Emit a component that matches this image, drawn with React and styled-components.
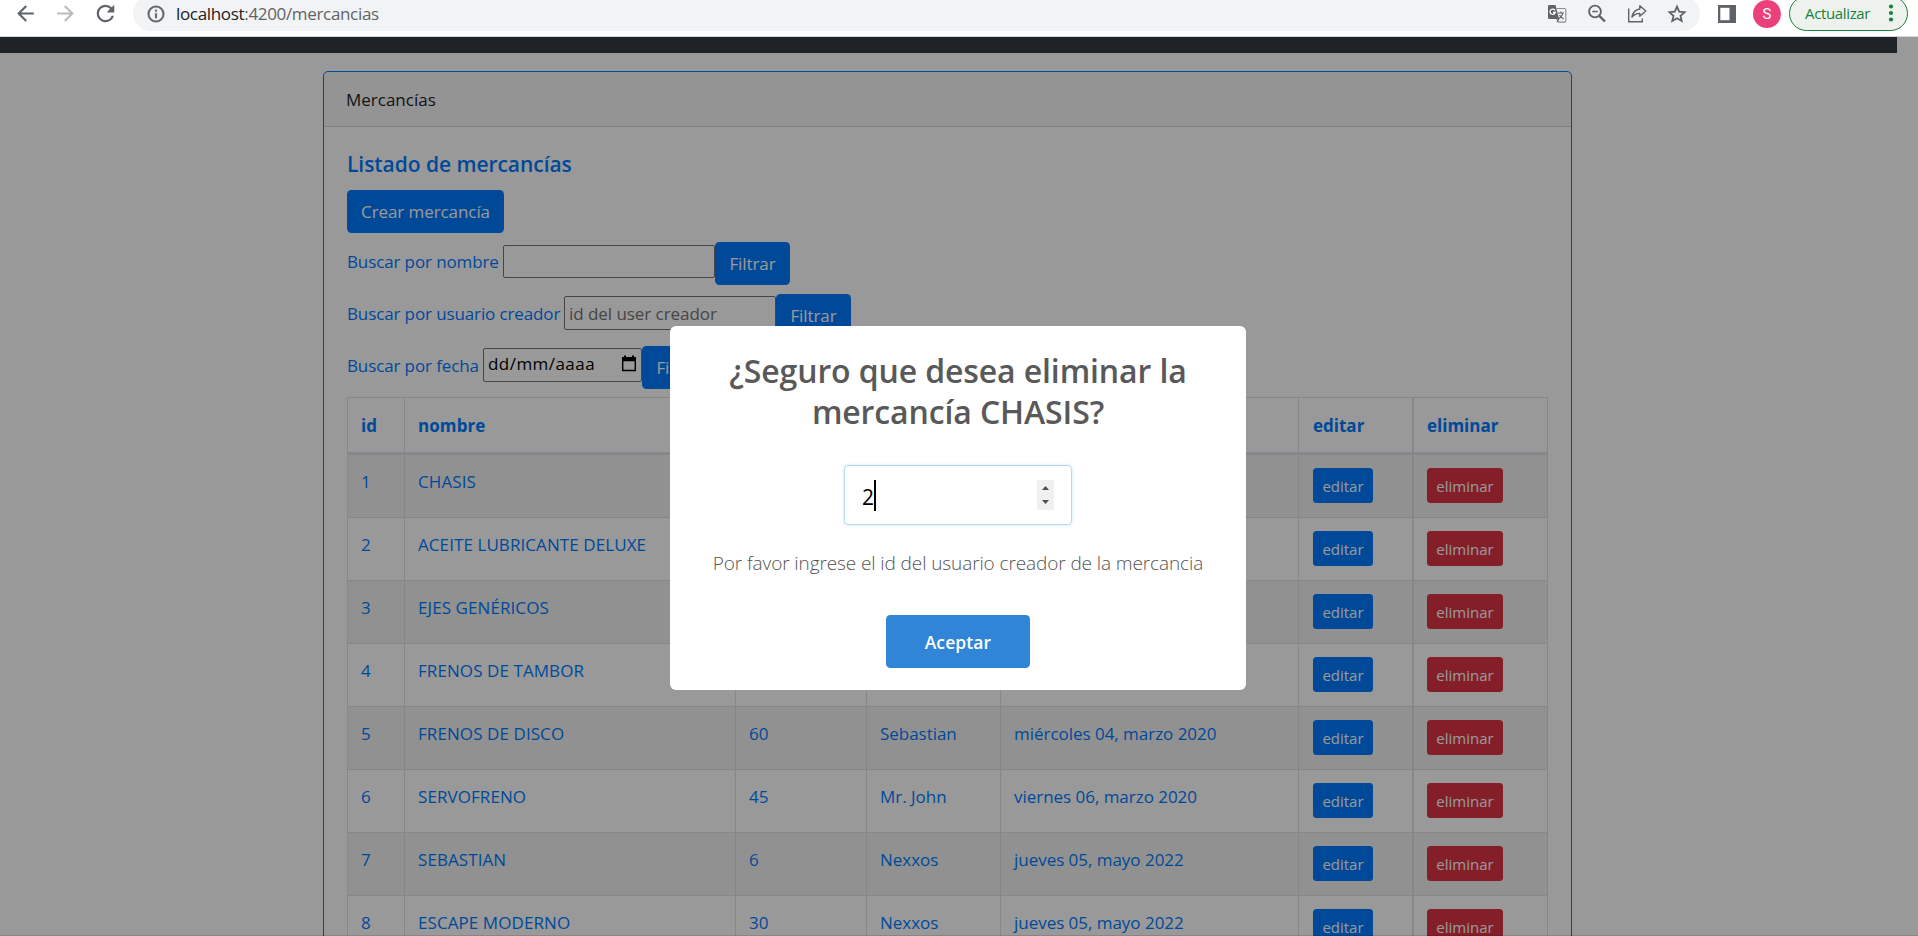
import React from "react";
import styled, { createGlobalStyle, css } from "styled-components";

const GlobalStyle = createGlobalStyle`
  *, *::before, *::after { box-sizing: border-box; }
  html, body { margin: 0; padding: 0; }
  body {
    font-family: "Open Sans", "Noto Sans", sans-serif;
    font-size: 17px;
    color: #212529;
    background: #fff;
    overflow: hidden;
  }
`;

/* ---------- browser toolbar ---------- */

const Window = styled.div`
  width: 1918px;
  height: 936px;
  display: flex;
  flex-direction: column;
  overflow: hidden;
`;

const Toolbar = styled.header`
  flex: none;
  height: 37px;
  background: #fff;
  border-bottom: 1px solid #d6d7d9;
  overflow: hidden;
`;

const ToolbarRow = styled.div`
  display: flex;
  align-items: center;
  height: 35px;
  margin-top: -4px;
  padding: 0 10px 0 13px;
`;

const NavIcons = styled.div`
  display: flex;
  align-items: center;
  gap: 16px;
  width: 120px;
  height: 33px;
`;

const NavIcon = styled.svg`
  flex: none;
  width: 25px;
  height: 25px;
  margin-right: -1px;
  fill: ${(p) => (p.$muted ? "#babcbe" : "#5f6368")};
`;

const Omnibox = styled.div`
  display: flex;
  align-items: center;
  width: 1567px;
  height: 35px;
  padding: 0 13px 0 13px;
  border-radius: 18px;
  background: #f1f3f4;
`;

const Url = styled.div`
  flex: 1;
  margin-left: 10px;
  font-size: 17px;
  letter-spacing: -0.33px;
  line-height: 35px;
  color: #5f6368;
`;

const UrlHost = styled.span`
  color: #202124;
`;

const OmniIcons = styled.div`
  display: flex;
  align-items: center;
  gap: 20px;
`;

const OmniIcon = styled.svg`
  flex: none;
  display: block;
  width: 20px;
  height: 20px;
`;

const PanelIcon = styled.svg`
  flex: none;
  width: 18px;
  height: 18px;
  margin-left: 18px;
`;

const Avatar = styled.div`
  width: 28px;
  height: 28px;
  margin-left: 17px;
  border-radius: 50%;
  background: #ec407a;
  color: #fff;
  font-family: Roboto, sans-serif;
  font-size: 15px;
  line-height: 28px;
  text-align: center;
`;

const UpdatePill = styled.div`
  display: flex;
  align-items: center;
  justify-content: space-between;
  width: 119px;
  height: 35px;
  margin-left: 8px;
  padding: 0 13px 2px 15px;
  border: 1.5px solid #188038;
  border-radius: 18px;
  background: #edf2ee;
  color: #188038;
  font-size: 15px;
  letter-spacing: -0.35px;
  line-height: 32px;
`;

/* ---------- page ---------- */

const Viewport = styled.div`
  position: relative;
  flex: 1;
  overflow: hidden;
  background: #fff;
`;

const Navbar = styled.div`
  width: 1897px;
  height: 16px;
  background: #343a40;
`;

const Card = styled.section`
  width: 1249px;
  height: 900px;
  margin: 18px 0 0 323px;
  border: 1px solid #007bff;
  border-radius: 5px;
  color: #007bff;
`;

const CardHeader = styled.div`
  height: 55px;
  padding-left: 22px;
  border-bottom: 1px solid rgba(0, 0, 0, 0.125);
  background: rgba(0, 0, 0, 0.03);
  color: #212529;
  line-height: 56px;
`;

const CardBody = styled.div`
  padding: 22px 23px;
`;

const CardTitle = styled.h5`
  margin: 0 0 12px;
  padding-top: 2px;
  font-size: 21px;
  font-weight: 600;
  letter-spacing: -0.05px;
  line-height: 27px;
`;

const Button = styled.button`
  display: block;
  flex: none;
  width: ${(p) => p.$w}px;
  height: 43px;
  padding: 0;
  border: 0;
  border-radius: 4.5px;
  background: #007bff;
  color: #fff;
  font: inherit;
  letter-spacing: -0.08px;
  line-height: 43px;
  ${(p) =>
    p.$small &&
    css`
      height: 35px;
      border-radius: 3.5px;
      font-size: 15px;
      letter-spacing: 0;
      line-height: 36px;
    `}
  ${(p) =>
    p.$danger &&
    css`
      background: #dc3545;
    `}
`;

const FilterRow = styled.div`
  display: flex;
  align-items: flex-start;
  height: 43px;
  margin-top: 9px;
`;

const FilterLabel = styled.label`
  flex: none;
  width: ${(p) => p.$w}px;
  letter-spacing: -0.12px;
  line-height: 39px;
  white-space: nowrap;
`;

const field = css`
  flex: none;
  width: ${(p) => p.$w}px;
  height: ${(p) => p.$h || 34}px;
  margin: ${(p) => p.$top || 2}px 0 0;
  border: 1px solid #767676;
  border-radius: 2px;
  background: #fff;
`;

const TextField = styled.input`
  ${field}
  padding: 0 4px;
  font: inherit;
  outline: none;
  &::placeholder {
    color: #757575;
    opacity: 1;
    letter-spacing: -0.05px;
  }
`;

const DateField = styled.div`
  ${field}
  display: flex;
  align-items: center;
  justify-content: space-between;
  padding: 0 4px 2px;
  color: #000;
  letter-spacing: 0.45px;
  line-height: 30px;
`;

const Table = styled.div`
  width: 1201px;
  margin-top: 8px;
  border: 1px solid #dee2e6;
  border-width: 1px 0 0 1px;
`;

const Cell = styled.div`
  padding: 13px 0 0 13px;
  border-right: 1px solid #dee2e6;
  line-height: 27px;
  white-space: nowrap;
  &:nth-child(2) {
    letter-spacing: 0.08px;
  }
  &:nth-child(4),
  &:nth-child(5) {
    letter-spacing: -0.03px;
  }
  &:nth-child(6) {
    padding-left: 14px;
    border-right-width: 2px;
  }
`;

const Row = styled.div`
  display: grid;
  grid-template-columns: 57px 331px 131px 134px 298px 115px 134px;
  height: 63px;
  border-bottom: 1px solid #dee2e6;
  background: ${(p) => (p.$striped ? "rgba(0, 0, 0, 0.05)" : "transparent")};
  ${(p) =>
    p.$head &&
    css`
      height: 57px;
      border-bottom-width: 3px;
      font-weight: 700;
      ${Cell} {
        padding-top: 14px;
      }
    `}
`;

/* ---------- dialog ---------- */

const Backdrop = styled.div`
  position: absolute;
  inset: 0;
  padding: 289px 0 0 670px;
  background: rgba(0, 0, 0, 0.4);
  border-bottom: 1px solid rgba(0, 0, 0, 0.12);
`;

const Dialog = styled.div`
  display: flex;
  flex-direction: column;
  align-items: center;
  width: 576px;
  height: 364px;
  padding-top: 24px;
  border-radius: 6px;
  background: #fff;
  text-align: center;
`;

const DialogTitle = styled.h2`
  margin: 0;
  color: #595959;
  font-size: 32px;
  font-weight: 600;
  letter-spacing: -0.12px;
  line-height: 41px;
  white-space: nowrap;
`;

const NumberField = styled.div`
  display: flex;
  align-items: center;
  width: 228px;
  height: 60px;
  margin-top: 33px;
  padding: 0 17px 0 17px;
  border: 1px solid #b4dbed;
  border-radius: 4px;
  box-shadow: 0 0 3px #c4e6f5;
  color: #000;
  font-size: 21px;
`;

const NumberValue = styled.span`
  padding-top: 3px;
`;

const Caret = styled.span`
  width: 2px;
  height: 31px;
  background: #000;
`;

const Spinner = styled.svg`
  width: 17px;
  height: 30px;
  margin-left: auto;
  background: #f0f0f0;
`;

const DialogText = styled.p`
  margin: 25px 0 38px;
  color: #545454;
  font-size: 19px;
  font-weight: 300;
  letter-spacing: -0.1px;
  line-height: 27px;
  white-space: nowrap;
`;

const Accept = styled.button`
  width: 144px;
  height: 53px;
  padding: 0;
  border: 0;
  border-radius: 4.5px;
  background: #3085d6;
  color: #fff;
  font: inherit;
  font-size: 17.5px;
  font-weight: 600;
  letter-spacing: 0.1px;
  line-height: 54px;
`;

const rows = [
  { id: 1, name: "CHASIS" },
  { id: 2, name: "ACEITE LUBRICANTE DELUXE" },
  { id: 3, name: "EJES GENÉRICOS" },
  { id: 4, name: "FRENOS DE TAMBOR" },
  { id: 5, name: "FRENOS DE DISCO", qty: 60, user: "Sebastian", date: "miércoles 04, marzo 2020" },
  { id: 6, name: "SERVOFRENO", qty: 45, user: "Mr. John", date: "viernes 06, marzo 2020" },
  { id: 7, name: "SEBASTIAN", qty: 6, user: "Nexxos", date: "jueves 05, mayo 2022" },
  { id: 8, name: "ESCAPE MODERNO", qty: 30, user: "Nexxos", date: "jueves 05, mayo 2022" },
];

function BrowserToolbar() {
  return (
    <Toolbar>
      <ToolbarRow>
        <NavIcons>
          <NavIcon viewBox="0 0 24 24">
            <path d="M20 11H7.83l5.59-5.59L12 4l-8 8 8 8 1.41-1.41L7.83 13H20v-2z" />
          </NavIcon>
          <NavIcon viewBox="0 0 24 24" $muted>
            <path d="M12 4l-1.410 1.410L16.170 11H4v2h12.170l-5.580 5.590L12 20l8-8z" />
          </NavIcon>
          <NavIcon viewBox="0.6 0.6 22.8 22.8">
            <path d="M17.650 6.350A7.960 7.960 0 0 0 12 4a8 8 0 1 0 7.730 10h-2.080A6 6 0 1 1 12 6c1.660 0 3.140.69 4.220 1.780L13 11h7V4l-2.350 2.350z" />
          </NavIcon>
        </NavIcons>
        <Omnibox>
          <OmniIcon viewBox="0 0 24 24">
            <path
              fill="#5f6368"
              stroke="#5f6368"
              strokeWidth="0.4"
              d="M11 7h2v2h-2zm0 4h2v6h-2zm1-9a10 10 0 1 0 0 20 10 10 0 0 0 0-20zm0 18a8 8 0 1 1 0-16 8 8 0 0 1 0 16z"
            />
          </OmniIcon>
          <Url>
            <UrlHost>localhost</UrlHost>:4200/mercancias
          </Url>
          <OmniIcons>
            <OmniIcon viewBox="0 0 20 20">
              <path d="M9.500 4.500h8a1.300 1.300 0 0 1 1.300 1.300v11a1.300 1.300 0 0 1-1.300 1.300h-6L9 14" fill="#f1f3f4" stroke="#8b8e91" strokeWidth="1.100" />
              <path d="M2.300 1h6.200l3.600 14H2.300A1.300 1.300 0 0 1 1 13.700V2.300A1.300 1.300 0 0 1 2.300 1z" fill="#5f6368" />
              <path d="M8 6.300A2.700 2.700 0 1 0 8.300 8.500H6" fill="none" stroke="#fff" strokeWidth="1.300" />
              <path d="M11 9h6M14 7.500V9M16 9c-.5 2.500-2 4-4 5.500M12.500 11c1 2 2.500 3 4 4M10 18l2-3.500" fill="none" stroke="#5f6368" strokeWidth="1.200" />
            </OmniIcon>
            <OmniIcon viewBox="0 0 20 20">
              <circle cx="8" cy="7.500" r="5.900" fill="none" stroke="#5f6368" strokeWidth="1.900" />
              <path d="M12.300 11.800l5.700 5.700" stroke="#5f6368" strokeWidth="2.400" />
              <path d="M5.300 7.500h5.400" stroke="#5f6368" strokeWidth="1.500" />
            </OmniIcon>
            <OmniIcon viewBox="0 0 20 20">
              <path d="M1.700 4.500v13.200h13.600V14.500" fill="none" stroke="#5f6368" strokeWidth="1.400" />
              <path d="M12.800 1.800l6 5.200-6 5.200V9.400c-3.600 0-5.900 1.300-7.800 3.800.6-4.200 3.200-7.500 7.800-8.200z" fill="none" stroke="#5f6368" strokeWidth="1.400" strokeLinejoin="round" />
            </OmniIcon>
            <OmniIcon viewBox="0 0 20 20">
              <path d="M10 2.600l2.200 5 5.400.5-4.100 3.600 1.200 5.300-4.700-2.800-4.700 2.800 1.200-5.300-4.100-3.600 5.400-.5z" fill="none" stroke="#5f6368" strokeWidth="1.800" />
            </OmniIcon>
          </OmniIcons>
        </Omnibox>
        <PanelIcon viewBox="0 0 18 18">
          <path fill="#5f6368" d="M0 0h18v18H0z" />
          <path fill="#fff" d="M2.300 2.800h9.200v12.400H2.300z" />
        </PanelIcon>
        <Avatar>S</Avatar>
        <UpdatePill>
          Actualizar
          <svg width="6" height="20" viewBox="0 0 6 20" fill="#188038">
            <circle cx="3" cy="3.500" r="2.100" />
            <circle cx="3" cy="10" r="2.100" />
            <circle cx="3" cy="16.500" r="2.100" />
          </svg>
        </UpdatePill>
      </ToolbarRow>
    </Toolbar>
  );
}

export default function App() {
  return (
    <Window>
      <GlobalStyle />
      <BrowserToolbar />
      <Viewport>
        <Navbar />
        <Card>
          <CardHeader>Mercancías</CardHeader>
          <CardBody>
            <CardTitle>Listado de mercancías</CardTitle>
            <Button $w={157}>Crear mercancía</Button>
            <FilterRow>
              <FilterLabel $w={156}>Buscar por nombre</FilterLabel>
              <TextField $w={212} $h={33} $top={3} />
              <Button $w={75}>Filtrar</Button>
            </FilterRow>
            <FilterRow>
              <FilterLabel $w={217}>Buscar por usuario creador</FilterLabel>
              <TextField $w={212} placeholder="id del user creador" />
              <Button $w={75}>Filtrar</Button>
            </FilterRow>
            <FilterRow>
              <FilterLabel $w={136}>Buscar por fecha</FilterLabel>
              <DateField $w={159}>
                dd/mm/aaaa
                <svg width="16" height="18" viewBox="0 0 16 18">
                  <path d="M1.700 5.500h12.600v10H1.700z" fill="none" stroke="#000" strokeWidth="1.400" />
                  <path d="M1 2h14v4H1zM3 .5h2V3H3zM11 .5h2V3h-2z" fill="#000" />
                </svg>
              </DateField>
              <Button $w={75}>Filtrar</Button>
            </FilterRow>
            <Table>
              <Row $head>
                <Cell>id</Cell>
                <Cell>nombre</Cell>
                <Cell />
                <Cell />
                <Cell />
                <Cell>editar</Cell>
                <Cell>eliminar</Cell>
              </Row>
              {rows.map((r, i) => (
                <Row key={r.id} $striped={i % 2 === 0}>
                  <Cell>{r.id}</Cell>
                  <Cell>{r.name}</Cell>
                  <Cell>{r.qty}</Cell>
                  <Cell>{r.user}</Cell>
                  <Cell>{r.date}</Cell>
                  <Cell>
                    <Button $small $w={60}>editar</Button>
                  </Cell>
                  <Cell>
                    <Button $small $danger $w={76}>eliminar</Button>
                  </Cell>
                </Row>
              ))}
            </Table>
          </CardBody>
        </Card>
        <Backdrop>
          <Dialog>
            <DialogTitle>
              ¿Seguro que desea eliminar la
              <br />
              mercancía CHASIS?
            </DialogTitle>
            <NumberField>
              <NumberValue>2</NumberValue>
              <Caret />
              <Spinner viewBox="0 0 17 30">
                <path d="M5 10l3.500-4 3.500 4zM5 20l3.500 4 3.500-4z" fill="#505050" />
              </Spinner>
            </NumberField>
            <DialogText>Por favor ingrese el id del usuario creador de la mercancia</DialogText>
            <Accept>Aceptar</Accept>
          </Dialog>
        </Backdrop>
      </Viewport>
    </Window>
  );
}
